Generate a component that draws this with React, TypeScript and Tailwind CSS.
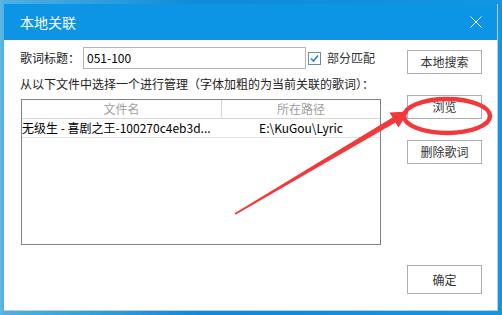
import React from "react";

const font = { fontFamily: '"Noto Sans CJK SC", "Microsoft YaHei", sans-serif' };

const Btn: React.FC<{ label: string; className?: string }> = ({ label, className }) => (
  <div
    className={`flex h-[24px] w-[75px] items-center justify-center border border-[#adadad] bg-white text-[12px] text-[#333] ${className ?? ""}`}
  >
    {label}
  </div>
);

export default function App() {
  return (
    <div
      className="relative h-[315px] w-[502px] overflow-hidden bg-[linear-gradient(90deg,#5cb9e6_0px,#4fb0e4_4px,#0d8ad8_40%,#1296e2_100%)] pl-[4px] pt-[4px]"
      style={font}
    >
      <div className="flex h-[307px] w-[494px] flex-col border-b border-r border-[#c9c9c9] bg-white">
        {/* title bar */}
        <div className="flex h-[36px] items-center justify-between bg-[#0b95e4] pl-[16px] pr-[14px] text-white">
          <span className="text-[14px]">本地关联</span>
          <svg width="12" height="12" viewBox="0 0 12 12" className="mr-[1px]">
            <path d="M0.5 0.5 L11.5 11.5 M11.5 0.5 L0.5 11.5" stroke="white" strokeWidth="1" />
          </svg>
        </div>

        {/* body */}
        <div className="flex flex-1 pl-[16px] pr-[15px]">
          <div className="flex w-[360px] flex-col">
            <div className="mt-[7px] flex h-[22px] items-center whitespace-nowrap text-[12px] text-[#222]">
              <span className="w-[63px] shrink-0">歌词标题：</span>
              <div className="flex h-[22px] w-[223px] shrink-0 items-center border border-[#b5b5b5] pl-[3px] text-[12px] text-black">
                051-100
              </div>
              <div className="ml-[2px] flex h-[13px] w-[13px] shrink-0 items-center justify-center border border-[#6f8aa6] bg-white">
                <svg width="11" height="11" viewBox="0 0 11 11">
                  <path d="M2 5.5 L4.5 8 L9 2.5" fill="none" stroke="#1f7fd6" strokeWidth="1.6" />
                </svg>
              </div>
              <span className="ml-[6px] text-[#333]">部分匹配</span>
            </div>

            <div className="mt-[7px] h-[16px] whitespace-nowrap text-[12px] leading-[16px] text-[#222]">
              从以下文件中选择一个进行管理（字体加粗的为当前关联的歌词）：
            </div>

            <div className="ml-[1px] mt-[7px] flex h-[146px] w-[360px] flex-col border border-[#828282]">
              <div className="flex h-[19px] border-b border-[#d5d5d5] text-[12px] leading-[18px] text-[#a0a0a0]">
                <div className="w-[200px] border-r border-[#d5d5d5] text-center">文件名</div>
                <div className="flex-1 text-center">所在路径</div>
              </div>
              <div className="flex h-[19px] border-b border-[#e3e3e3] text-[12px] leading-[18px] text-black">
                <div className="w-[200px] whitespace-nowrap">无级生 - 喜剧之王-100270c4eb3d...</div>
                <div className="flex-1 text-center">E:\KuGou\Lyric</div>
              </div>
            </div>
          </div>

          <div className="ml-auto flex flex-col pt-[10px]">
            <Btn label="本地搜索" />
            <Btn label="浏览" className="mt-[21px]" />
            <Btn label="删除歌词" className="mt-[21px]" />
            <Btn label="确定" className="mt-[101px] h-[29px]" />
          </div>
        </div>
      </div>

      {/* annotation overlay */}
      <svg className="pointer-events-none absolute left-0 top-0" width="502" height="315" viewBox="0 0 502 315">
        <ellipse cx="447" cy="116" rx="43" ry="17" fill="none" stroke="#f2383a" strokeWidth="4.5" />
        <path
          d="M235.4 214.7 L395.5 122.6 L398.5 127.5 L408.5 111.5 L389.5 112.5 L392.5 117.4 L234.6 213.3 Z"
          fill="#f2383a"
        />
      </svg>
    </div>
  );
}
